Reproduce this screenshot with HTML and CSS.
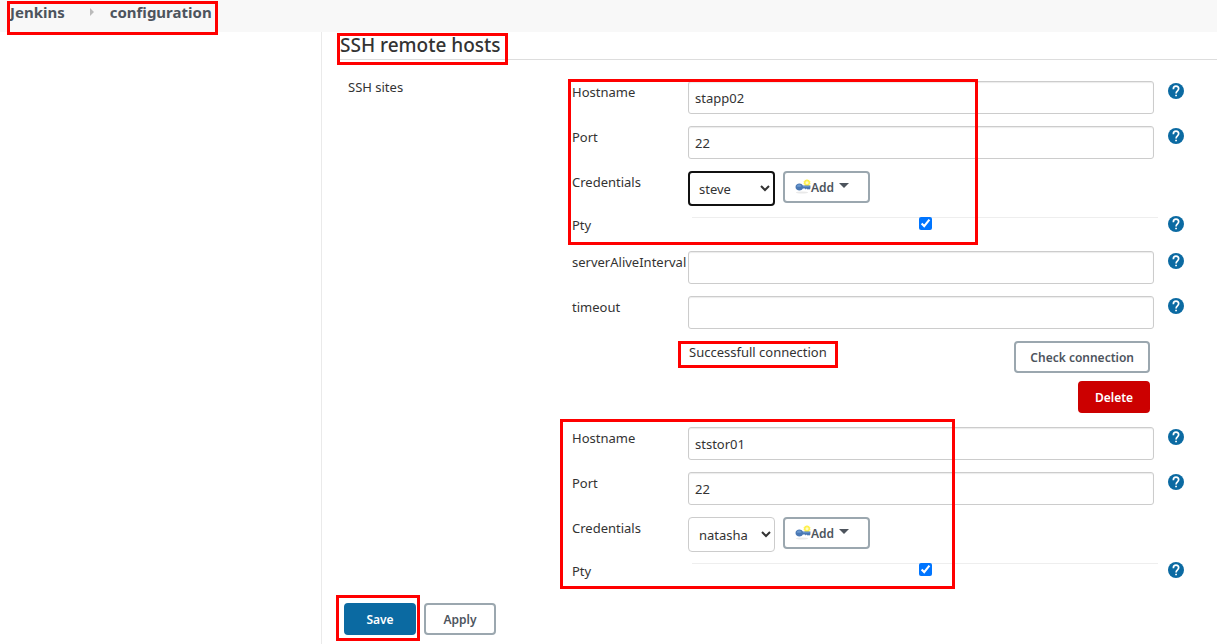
FILE: index.html
```html
<!DOCTYPE html>
<html lang="en">

<head>
  <meta charset="UTF-8">
  <meta name="viewport" content="width=device-width, initial-scale=1.0">
  <title>configuration [Jenkins]</title>
  <link rel="stylesheet" href="styles.css">
</head>

<body>
  <!-- shared icons -->
  <svg class="sprite" aria-hidden="true">
    <symbol id="icon-help" viewBox="0 0 24 24">
      <path fill="#0b6aa2" d="M12 0a12 12 0 1 0 0 24 12 12 0 0 0 0-24z" />
      <path fill="none" stroke="#fff" stroke-width="2.5" d="M8 9.2C8 6.5 9.700 4.800 12 4.800s4 1.600 4 4c0 2.900-3.900 3.200-3.900 6.800" />
      <path fill="#fff" d="M10.800 17.500h2.600v2.500h-2.600z" />
    </symbol>
    <symbol id="icon-key" viewBox="0 0 16 16">
      <ellipse cx="7" cy="13.500" rx="6" ry="1" fill="#e9e9e9" />
      <path fill="#fff04d" d="M12 0l.9.9 1.300-.2.2 1.300 1.200.6-.6 1.200.6 1.200-1.200.6-.2 1.300-1.300-.2-.9.900-.9-.900-1.300.2-.2-1.300-1.200-.6.6-1.200-.6-1.200 1.200-.6.2-1.300 1.300.2z" />
      <circle cx="12" cy="3.800" r="1.500" fill="#fffcc4" />
      <path fill="#4a78b4" d="M4.500 4.500C2.300 4.500.5 6 .5 8s1.800 3.500 4 3.500c1.600 0 2.800-.8 3.400-2h2l.8.9.9-.8.9.8 1-.1 1 .2.900-.900V6.600H7.900C7.200 5.300 6.100 4.500 4.500 4.500z" />
      <path fill="#6b99cf" d="M3.800 5.500c-1.100.2-2 1-2.100 2 1.300.5 3.600.4 4.900-.3C6.200 6.100 5.100 5.400 3.800 5.500zM7.900 7.200h6.600v.8H7.900z" />
    </symbol>
  </svg>

  <header class="breadcrumbs">
    <a href="#">Jenkins</a>
    <svg class="crumb-arrow" viewBox="0 0 4 8" aria-hidden="true"><path fill="#bbb" d="M0 0l4 4-4 4z" /></svg>
    <a href="#">configuration</a>
    <span class="mark mark-crumbs"></span>
  </header>

  <div class="page">
    <aside class="side-panel"></aside>

    <main class="main-panel">
      <form>
        <div class="section-header">
          <h2>SSH remote hosts</h2>
          <span class="mark mark-title"></span>
        </div>

        <div class="setting">
          <div class="setting-name">SSH sites</div>

          <div class="sites">
            <div class="site">
              <span class="mark mark-site-one"></span>
              <div class="row">
                <label for="host1">Hostname</label>
                <input type="text" id="host1" class="field" value="stapp02">
                <a href="#" class="help" aria-label="Help"><svg><use href="#icon-help" /></svg></a>
              </div>
              <div class="row">
                <label for="port1">Port</label>
                <input type="text" id="port1" class="field" value="22">
                <a href="#" class="help" aria-label="Help"><svg><use href="#icon-help" /></svg></a>
              </div>
              <div class="row">
                <label for="cred1">Credentials</label>
                <div class="credentials">
                  <select id="cred1" class="focused">
                    <option>steve</option>
                  </select>
                  <button type="button" class="btn btn-add"><svg class="key"><use href="#icon-key" /></svg>Add<span class="caret"></span></button>
                </div>
              </div>
              <div class="row row-check">
                <label for="pty1">Pty</label>
                <div class="check"><input type="checkbox" id="pty1" checked></div>
                <a href="#" class="help" aria-label="Help"><svg><use href="#icon-help" /></svg></a>
              </div>
              <div class="row">
                <label for="alive1">serverAliveInterval</label>
                <input type="text" id="alive1" class="field">
                <a href="#" class="help" aria-label="Help"><svg><use href="#icon-help" /></svg></a>
              </div>
              <div class="row">
                <label for="timeout1">timeout</label>
                <input type="text" id="timeout1" class="field">
                <a href="#" class="help" aria-label="Help"><svg><use href="#icon-help" /></svg></a>
              </div>
              <div class="row row-actions">
                <div class="status">Successfull connection<span class="mark mark-status"></span></div>
                <div class="actions">
                  <button type="button" class="btn">Check connection</button>
                  <button type="button" class="btn btn-danger">Delete</button>
                </div>
              </div>
            </div>

            <div class="site">
              <span class="mark mark-site-two"></span>
              <div class="row">
                <label for="host2">Hostname</label>
                <input type="text" id="host2" class="field" value="ststor01">
                <a href="#" class="help" aria-label="Help"><svg><use href="#icon-help" /></svg></a>
              </div>
              <div class="row">
                <label for="port2">Port</label>
                <input type="text" id="port2" class="field" value="22">
                <a href="#" class="help" aria-label="Help"><svg><use href="#icon-help" /></svg></a>
              </div>
              <div class="row">
                <label for="cred2">Credentials</label>
                <div class="credentials">
                  <select id="cred2">
                    <option>natasha</option>
                  </select>
                  <button type="button" class="btn btn-add"><svg class="key"><use href="#icon-key" /></svg>Add<span class="caret"></span></button>
                </div>
              </div>
              <div class="row row-check">
                <label for="pty2">Pty</label>
                <div class="check"><input type="checkbox" id="pty2" checked></div>
                <a href="#" class="help" aria-label="Help"><svg><use href="#icon-help" /></svg></a>
              </div>
            </div>
          </div>
        </div>

        <div class="bottom-bar">
          <button type="submit" class="btn btn-primary">Save</button>
          <button type="button" class="btn">Apply</button>
          <span class="mark mark-save"></span>
        </div>
      </form>
    </main>
  </div>
</body>

</html>
```

FILE: styles.css
```css
* {
  box-sizing: border-box;
}

body {
  margin: 0;
  min-height: 100vh;
  display: flex;
  flex-direction: column;
  font-family: "Noto Sans", "Open Sans", sans-serif;
  font-size: 13px;
  line-height: 22px;
  color: #333;
  background: #fff;
}

.sprite {
  position: absolute;
  width: 0;
  height: 0;
}

/* red highlight frames */
.mark {
  position: absolute;
  border: 3px solid #f00;
  pointer-events: none;
}

.breadcrumbs {
  position: relative;
  display: flex;
  align-items: center;
  height: 32px;
  padding: 0 10px 8px;
  background: #f8f8f8;
}

.breadcrumbs a {
  color: #4d545d;
  font-size: 15px;
  font-weight: 700;
  text-decoration: none;
}

.crumb-arrow {
  width: 4px;
  height: 8px;
  margin: 0 16px 0 25px;
}

.mark-crumbs {
  top: 1px;
  left: 7px;
  width: 211px;
  height: 34px;
}

.page {
  flex: 1;
  display: flex;
}

.side-panel {
  width: 322px;
  flex-shrink: 0;
  border-right: 1px solid #eaeaea;
}

.main-panel {
  flex: 1;
  padding-left: 18px;
}

.section-header {
  position: relative;
  border-bottom: 1px solid #ddd;
}

.section-header h2 {
  margin: 0;
  padding-bottom: 1px;
  font-size: 19px;
  font-weight: 500;
  line-height: 26px;
}

.mark-title {
  top: 1px;
  left: -3px;
  width: 171px;
  height: 32px;
}

.setting {
  display: flex;
  padding: 21px 33px 0 8px;
}

.setting-name {
  width: 224px;
  flex-shrink: 0;
  line-height: 12px;
}

.sites {
  flex: 1;
}

.site {
  position: relative;
}

.mark-site-one {
  top: -2px;
  left: -4px;
  width: 410px;
  height: 166px;
}

.mark-site-two {
  top: -8px;
  left: -12px;
  width: 395px;
  height: 170px;
}

.row {
  display: grid;
  grid-template-columns: 116px 1fr 16px;
  align-items: start;
  min-height: 45px;
}

.field {
  height: 33px;
  margin-right: 14px;
  padding: 0 6px;
  border: 1px solid #ccc;
  border-radius: 3px;
  box-shadow: inset 0 1px 1px rgba(0, 0, 0, 0.08);
  font: inherit;
  color: #333;
}

.help svg {
  display: block;
  width: 16px;
  height: 16px;
  margin-top: 2px;
}

.credentials {
  display: flex;
  align-items: flex-start;
  gap: 8px;
}

select {
  width: 87px;
  height: 35px;
  padding: 0 0 0 6px;
  border: 1px solid #ccc;
  border-radius: 4px;
  background: #fff;
  font: inherit;
  color: #333;
}

select.focused {
  padding-left: 5px;
  border: 2px solid #111;
}

.btn {
  height: 32px;
  min-width: 72px;
  padding: 0 14px;
  border: 2px solid #9ba7af;
  border-radius: 4px;
  background: #fff;
  font-family: inherit;
  font-size: 12px;
  font-weight: 600;
  color: #4d545d;
  cursor: pointer;
}

.btn-add {
  display: flex;
  align-items: center;
  width: 87px;
  padding: 0 10px;
}

.key {
  width: 16px;
  height: 16px;
}

.caret {
  margin: 0 0 3px 5px;
  border: 5px solid transparent;
  border-top-color: #4d545d;
  border-bottom: 0;
}

.btn-primary {
  border-color: #0b6aa2;
  background: #0b6aa2;
  color: #fff;
}

.btn-danger {
  border-color: #c00;
  background: #c00;
  color: #fff;
}

.row-check {
  min-height: 34px;
  margin-top: 1px;
}

.row-check label {
  margin-top: -3px;
}

.row-check .help svg {
  margin-top: -1px;
}

.check {
  display: flex;
  justify-content: center;
  height: 13px;
  margin: 0 10px 0 4px;
  background: linear-gradient(#eee, #eee) top / 100% 1px no-repeat;
}

.check input {
  width: 13px;
  height: 13px;
  margin: 0;
}

.row-actions {
  display: flex;
  justify-content: space-between;
  padding: 0 34px 14px 117px;
}

.status {
  position: relative;
}

.mark-status {
  top: 0;
  left: -11px;
  width: 160px;
  height: 27px;
}

.actions {
  display: flex;
  flex-direction: column;
  align-items: flex-end;
  gap: 8px;
}

.bottom-bar {
  position: relative;
  display: flex;
  gap: 8px;
  padding: 6px 4px 9px;
}

.mark-save {
  top: -2px;
  left: -4px;
  width: 84px;
  height: 46px;
}
```
